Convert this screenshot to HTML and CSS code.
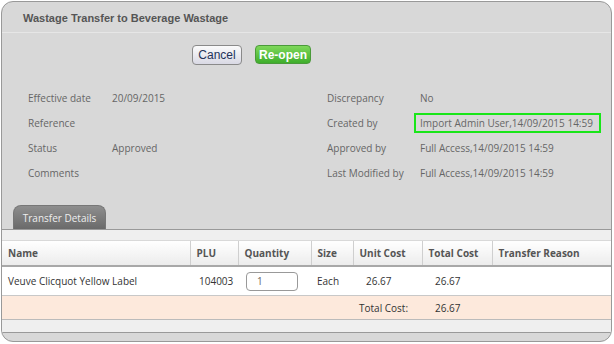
FILE: index.html
```html
<!DOCTYPE html>
<html>
<head>
<meta charset="utf-8">
<link rel="stylesheet" href="styles.css">
</head>
<body>
<div class="panel">
  <div class="header"><h1 class="title">Wastage Transfer to Beverage Wastage</h1></div>
  <div class="actions">
    <button class="btn btn-cancel">Cancel</button>
    <button class="btn btn-reopen">Re-open</button>
  </div>
  <div class="info">
    <div class="col">
      <div class="row"><span class="lbl">Effective date</span><span class="val">20/09/2015</span></div>
      <div class="row"><span class="lbl">Reference</span><span class="val"></span></div>
      <div class="row"><span class="lbl">Status</span><span class="val">Approved</span></div>
      <div class="row"><span class="lbl">Comments</span><span class="val"></span></div>
    </div>
    <div class="col col-right">
      <div class="row"><span class="lbl">Discrepancy</span><span class="val">No</span></div>
      <div class="row"><span class="lbl">Created by</span><span class="val"><span class="hl">Import Admin User,14/09/2015 14:59</span></span></div>
      <div class="row"><span class="lbl">Approved by</span><span class="val">Full Access,14/09/2015 14:59</span></div>
      <div class="row"><span class="lbl">Last Modified by</span><span class="val">Full Access,14/09/2015 14:59</span></div>
    </div>
  </div>
  <div class="tabs"><div class="tab">Transfer Details</div></div>
  <div class="tabbody">
    <div class="band"></div>
    <table class="grid">
      <colgroup>
        <col class="c-name"><col class="c-plu"><col class="c-qty"><col class="c-size"><col class="c-unit"><col class="c-total"><col>
      </colgroup>
      <thead>
        <tr><th>Name</th><th>PLU</th><th>Quantity</th><th>Size</th><th>Unit Cost</th><th>Total Cost</th><th>Transfer Reason</th></tr>
      </thead>
      <tbody>
        <tr class="item">
          <td>Veuve Clicquot Yellow Label</td>
          <td class="plu">104003</td>
          <td><span class="qty">1</span></td>
          <td>Each</td>
          <td class="num">26.67</td>
          <td class="num">26.67</td>
          <td></td>
        </tr>
        <tr class="total">
          <td></td><td></td><td></td><td></td>
          <td class="tlabel">Total Cost:</td>
          <td class="num">26.67</td>
          <td></td>
        </tr>
      </tbody>
    </table>
    <div class="band band-bottom"></div>
  </div>
</div>
</body>
</html>
```
FILE: styles.css
```css
html, body {
  margin: 0;
  padding: 0;
  background: #ffffff;
}
body {
  font-family: "Open Sans", "Noto Sans", sans-serif;
  font-size: 10px;
  color: #666;
  white-space: nowrap;
}
.panel {
  margin: 1px 0 0 1px;
  width: 609px;
  height: 339px;
  border: 1px solid #999;
  border-radius: 12px;
  background: #d8d8d8;
  overflow: hidden;
  display: flex;
  flex-direction: column;
}
.header {
  height: 30px;
  border-bottom: 1px solid #e6e6e6;
  display: flex;
  align-items: center;
  padding-left: 21px;
}
.title {
  margin: 0;
  font-family: "Liberation Sans", Arial, sans-serif;
  font-weight: bold;
  font-size: 11px;
  color: #555;
  padding-top: 2px;
}
.actions {
  display: flex;
  gap: 13px;
  padding: 12px 0 0 190px;
  height: 20px;
}
.btn {
  font-family: "Liberation Sans", Arial, sans-serif;
  font-size: 12px;
  height: 20px;
  padding: 0;
  border-radius: 4px;
  white-space: nowrap;
  cursor: pointer;
}
.btn-cancel {
  width: 50px;
  border: 1px solid #8a8a8a;
  background: linear-gradient(#fbfbfb, #d9d9e4);
  color: #23335a;
}
.btn-reopen {
  width: 56px;
  height: 19px;
  border: 1px solid #4a9a3a;
  background: linear-gradient(#7ed85a, #3fae2c);
  color: #fff;
  font-weight: bold;
}
.info {
  display: flex;
  padding: 20px 0 0 26px;
  height: 104px;
}
.col {
  width: 299px;
}
.col-right {
  width: 280px;
}
.row {
  display: flex;
  height: 25px;
  align-items: center;
}
.lbl {
  width: 84px;
  flex: none;
}
.col-right .lbl {
  width: 93px;
}
.hl {
  display: inline-block;
  border: 2px solid #19e619;
  padding: 0 6px 0 4px;
  margin-left: -6px;
  line-height: 16px;
}
.tabs {
  padding: 16px 0 0 11px;
  border-bottom: 1px solid #999;
  display: flex;
}
.tab {
  width: 93px;
  height: 24px;
  border: 1px solid #777;
  border-bottom: none;
  border-radius: 8px 8px 0 0;
  background: linear-gradient(#8e8e8e, #6a6a6a);
  color: #eee;
  text-align: center;
  line-height: 24px;
  box-sizing: border-box;
}
.tabbody {
  display: flex;
  flex-direction: column;
  flex: 1;
}
.band {
  height: 10px;
  background: #efefef;
  border-bottom: 1px solid #d9d9d9;
}
.band-bottom {
  height: 12px;
  border-bottom: 1px solid #999;
  border-top: 1px solid #bbb;
}
.grid {
  border-collapse: collapse;
  table-layout: fixed;
  width: 100%;
}
.c-name { width: 188px; }
.c-plu { width: 48px; }
.c-qty { width: 73px; }
.c-size { width: 42px; }
.c-unit { width: 69px; }
.c-total { width: 70px; }
.grid th {
  height: 24px;
  text-align: left;
  font-weight: bold;
  color: #555;
  padding: 0 0 0 6px;
  background: linear-gradient(#ffffff, #ececec);
  border-right: 1px solid #cfcfcf;
  border-bottom: 2px solid #a8a8a8;
  border-left: 1px solid #cfcfcf;
}
.grid th:first-child {
  border-left: none;
}
.grid th:last-child {
  border-right: none;
}
.grid td {
  padding: 0 0 0 6px;
  color: #333;
}
.item td {
  height: 28px;
  background: #fff;
  border-bottom: 1px solid #c8c8c8;
}
.total td {
  height: 23px;
  background: #fde9dc;
}
.plu {
  padding-left: 9px !important;
}
.num {
  padding-left: 13px !important;
}
.tlabel {
  padding-left: 6px !important;
}
.qty {
  display: inline-block;
  width: 40px;
  height: 17px;
  border: 1px solid #999;
  border-radius: 4px;
  padding-left: 10px;
  line-height: 17px;
  color: #666;
  margin-left: 2px;
  background: #fff;
}
```
